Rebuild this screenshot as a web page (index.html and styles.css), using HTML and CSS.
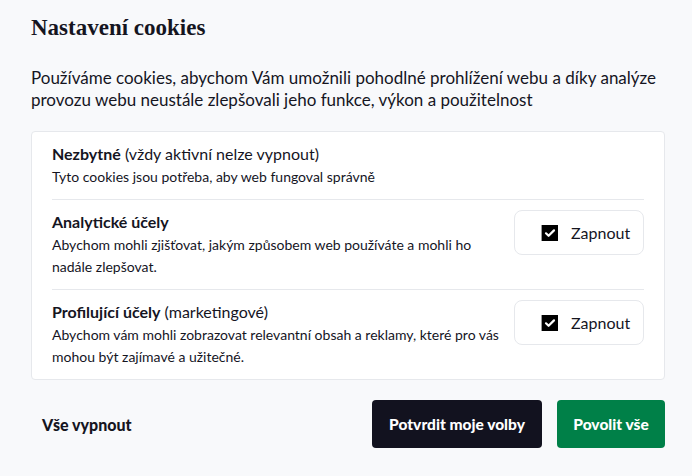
FILE: index.html
```html
<!DOCTYPE html>
<html lang="cs">
<head>
<meta charset="utf-8">
<link rel="stylesheet" href="styles.css">
</head>
<body>
<div class="dialog">
  <h1 class="title">Nastavení cookies</h1>
  <p class="intro">Používáme cookies, abychom Vám umožnili pohodlné prohlížení webu a díky analýze provozu webu neustále zlepšovali jeho funkce, výkon a použitelnost</p>
  <div class="card">
    <div class="row">
      <div class="text">
        <div class="name"><b>Nezbytné</b> (vždy aktivní nelze vypnout)</div>
        <div class="desc">Tyto cookies jsou potřeba, aby web fungoval správně</div>
      </div>
    </div>
    <div class="row">
      <div class="text">
        <div class="name"><b>Analytické účely</b></div>
        <div class="desc">Abychom mohli zjišťovat, jakým způsobem web používáte a mohli ho nadále zlepšovat.</div>
      </div>
      <label class="toggle"><span class="check"><svg viewBox="0 0 16 16" width="16" height="16"><path d="M4 8.3l2.6 2.5L12 5.4" fill="none" stroke="#fff" stroke-width="2.2" stroke-linecap="round" stroke-linejoin="round"/></svg></span>Zapnout</label>
    </div>
    <div class="row">
      <div class="text">
        <div class="name"><b>Profilující účely</b> (marketingové)</div>
        <div class="desc">Abychom vám mohli zobrazovat relevantní obsah a reklamy, které pro vás mohou být zajímavé a užitečné.</div>
      </div>
      <label class="toggle"><span class="check"><svg viewBox="0 0 16 16" width="16" height="16"><path d="M4 8.3l2.6 2.5L12 5.4" fill="none" stroke="#fff" stroke-width="2.2" stroke-linecap="round" stroke-linejoin="round"/></svg></span>Zapnout</label>
    </div>
  </div>
  <div class="actions">
    <button class="btn btn-link">Vše vypnout</button>
    <div class="right">
      <button class="btn btn-dark">Potvrdit moje volby</button>
      <button class="btn btn-green">Povolit vše</button>
    </div>
  </div>
</div>
</body>
</html>
```
FILE: styles.css
```css
html, body {
  margin: 0;
  padding: 0;
  background: #f8f9fb;
}
body {
  font-family: "Lato", "Open Sans", sans-serif;
  color: #15151f;
}
.dialog {
  width: 634px;
  padding: 12px 27px 0 31px;
}
.title {
  font-family: "Liberation Serif", "DejaVu Serif", serif;
  font-weight: 700;
  font-size: 23px;
  line-height: 32px;
  margin: 0;
}
.intro {
  margin: 23px 0 20px;
  font-size: 17px;
  line-height: 22px;
}
.card {
  background: #fff;
  border: 1px solid #e6e8ec;
  border-radius: 4px;
  padding: 0 20px;
}
.row {
  display: flex;
  align-items: center;
  justify-content: space-between;
  border-bottom: 1px solid #e6e8ec;
  padding: 10px 0 11px;
}
.row:last-child {
  border-bottom: none;
}
.text {
  max-width: 452px;
}
.name {
  font-size: 16px;
  line-height: 24px;
}
.name b {
  font-weight: 700;
}
.desc {
  font-size: 14px;
  line-height: 22px;
}
.toggle {
  display: flex;
  align-items: center;
  width: 130px;
  height: 45px;
  box-sizing: border-box;
  border: 1px solid #e6e8ec;
  border-radius: 8px;
  padding-left: 26px;
  font-size: 16px;
  flex-shrink: 0;
  align-self: flex-start;
}
.check {
  width: 16px;
  height: 16px;
  background: #000;
  border-left: 1px solid #9a9a9a;
  display: flex;
  margin-right: 13px;
}
.actions {
  display: flex;
  justify-content: space-between;
  align-items: center;
  margin-top: 20px;
}
.right {
  display: flex;
  gap: 15px;
}
.btn {
  font-family: "Lato", "Open Sans", sans-serif;
  font-weight: 900;
  font-size: 15.5px;
  white-space: nowrap;
  border: none;
  height: 48px;
  border-radius: 4px;
  padding: 0;
  cursor: pointer;
}
.btn-link {
  background: none;
  color: #15151f;
  padding-left: 11px;
  font-size: 16px;
}
.btn-dark {
  background: #12121f;
  color: #fff;
  width: 170px;
}
.btn-green {
  background: #008048;
  color: #fff;
  width: 108px;
}
```
